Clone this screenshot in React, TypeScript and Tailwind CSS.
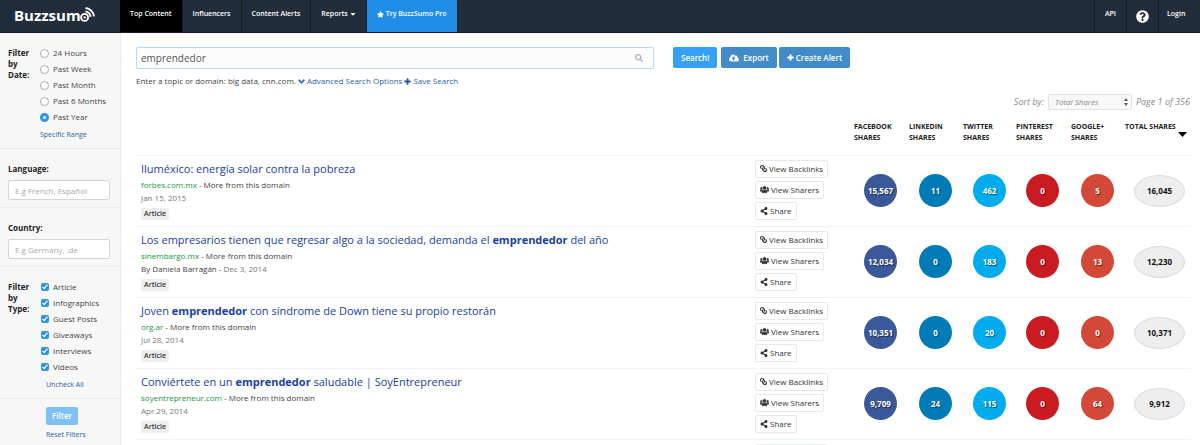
import type { ReactNode } from "react";
import {
  FaCaretDown,
  FaChevronDown,
  FaCloudUploadAlt,
  FaLink,
  FaPlus,
  FaQuestionCircle,
  FaSearch,
  FaShareAlt,
  FaStar,
  FaUsers,
} from "react-icons/fa";

const DATES = ["24 Hours", "Past Week", "Past Month", "Past 6 Months", "Past Year"];
const TYPES = ["Article", "Infographics", "Guest Posts", "Giveaways", "Interviews", "Videos"];

const ROWS = [
  {
    title: <>Iluméxico: energía solar contra la pobreza</>,
    domain: "forbes.com.mx",
    date: "Jan 15, 2015",
    shares: ["15,567", "11", "462", "0", "5"],
    total: "16,045",
  },
  {
    title: (
      <>
        Los empresarios tienen que regresar algo a la sociedad, demanda el <b>emprendedor</b> del año
      </>
    ),
    domain: "sinembargo.mx",
    author: "Daniela Barragán",
    date: "Dec 3, 2014",
    shares: ["12,034", "0", "183", "0", "13"],
    total: "12,230",
  },
  {
    title: (
      <>
        Joven <b>emprendedor</b> con síndrome de Down tiene su propio restorán
      </>
    ),
    domain: "org.ar",
    date: "Jul 28, 2014",
    shares: ["10,351", "0", "20", "0", "0"],
    total: "10,371",
  },
  {
    title: (
      <>
        Conviértete en un <b>emprendedor</b> saludable | SoyEntrepreneur
      </>
    ),
    domain: "soyentrepreneur.com",
    date: "Apr 29, 2014",
    shares: ["9,709", "24", "115", "0", "64"],
    total: "9,912",
  },
];

const SHARE_COLORS = ["bg-[#3b5998]", "bg-[#007bb6]", "bg-[#00aced]", "bg-[#cb1b22]", "bg-[#d34836]"];

const Logo = () => (
  <a href="#" aria-label="Buzzsumo" className="flex w-[120px] items-center pb-0.5 pl-[14px] text-white">
    <span className="text-[15px] font-bold">Buzzsum</span>
    <svg viewBox="0 0 16 20" className="-ml-px h-5 w-4" fill="none" stroke="currentColor">
      <circle cx="4.6" cy="12.4" r="3.5" strokeWidth="1.9" />
      <circle cx="4.6" cy="12.4" r="1" fill="currentColor" strokeWidth="0.4" />
      <path d="M5.4 6.4a6.4 6.4 0 0 1 5.2 5.4" strokeWidth="1.8" />
      <path d="M5.6 3a9.6 9.6 0 0 1 8.4 8.4" strokeWidth="1.8" />
    </svg>
  </a>
);

const NavLink = ({ children, className = "" }: { children: ReactNode; className?: string }) => (
  <a href="#" className={`flex items-center gap-0.5 border-r border-[#161d27] px-2.5 pb-1 ${className}`}>
    {children}
  </a>
);

const Header = () => (
  <header className="flex h-[33px] border-b border-[#161d27] bg-[#222d3b] text-[7px] font-semibold text-white">
    <Logo />
    <nav className="flex flex-1">
      <NavLink className="bg-black">Top Content</NavLink>
      <NavLink>Influencers</NavLink>
      <NavLink>Content Alerts</NavLink>
      <NavLink>
        Reports <FaCaretDown className="-mx-px size-2" />
      </NavLink>
      <NavLink className="bg-[#218de6]">
        <FaStar className="size-[7px]" /> Try BuzzSumo Pro
      </NavLink>
      <NavLink className="ml-auto border-l">API</NavLink>
      <a href="#" aria-label="Help" className="flex items-center border-r border-[#161d27] px-[9px]">
        <FaQuestionCircle className="size-[13px]" />
      </a>
      <a href="#" className="flex w-[41px] items-center px-2 pb-1">
        Login
      </a>
    </nav>
  </header>
);

const TextFilter = ({ id, label, placeholder }: { id: string; label: string; placeholder: string }) => (
  <div className="border-b border-[#eceeee] px-2 pb-[7px] pt-3">
    <label htmlFor={id} className="block leading-4 font-bold text-[#222]">
      {label}
    </label>
    <input
      id={id}
      placeholder={placeholder}
      className="mt-[3px] h-5 w-[102px] rounded-xs border border-[#d5d5d5] bg-white px-1.5 placeholder:text-[#aaa]"
    />
  </div>
);

const Sidebar = () => (
  <aside className="w-[121px] shrink-0 border-r border-[#e8eced] bg-[#f7f7f7] text-[8px] text-[#444]">
    <fieldset className="flex border-b border-[#eceeee] px-2 pb-[7px] pt-3">
      <legend className="float-left w-8 pt-0.5 font-bold leading-[11px] text-[#222]">Filter by Date:</legend>
      <div className="flex flex-col">
        {DATES.map((date) => (
          <label key={date} className="flex h-4 items-center gap-1 leading-4">
            <input
              type="radio"
              name="date"
              defaultChecked={date === "Past Year"}
              className="size-[9px] appearance-none rounded-full border border-[#aaa] bg-white checked:border-[3px] checked:border-[#2b95f5]"
            />
            {date}
          </label>
        ))}
        <a href="#" className="mt-1 text-[7px] leading-3 text-[#2a5f9e]">
          Specific Range
        </a>
      </div>
    </fieldset>
    <TextFilter id="language" label="Language:" placeholder="E.g French, Español" />
    <TextFilter id="country" label="Country:" placeholder="E.g Germany, .de" />
    <fieldset className="flex border-b border-[#eceeee] px-2 pb-[7px] pt-3">
      <legend className="float-left w-8 pt-0.5 font-bold leading-[11px] text-[#222]">Filter by Type:</legend>
      <div className="flex flex-col">
        {TYPES.map((type) => (
          <label key={type} className="flex h-4 items-center gap-1 leading-4">
            <input type="checkbox" defaultChecked className="ml-px size-2 accent-[#2b95f5]" />
            {type}
          </label>
        ))}
        <a href="#" className="ml-[6px] mt-1 text-[7px] leading-3 text-[#2a5f9e]">
          Uncheck All
        </a>
      </div>
    </fieldset>
    <div className="flex flex-col items-start gap-1 py-2 pl-[46px]">
      <button type="button" className="h-[18px] rounded-xs bg-[#7fc0f7] px-1.5 font-semibold text-white">
        Filter
      </button>
      <a href="#" className="text-[7px] leading-3 text-[#2a5f9e]">
        Reset Filters
      </a>
    </div>
  </aside>
);

const SearchBar = () => (
  <form className="flex items-start">
    <div className="w-[518px]">
      <div className="flex h-[22px] items-center rounded-xs border border-[#b5daf5] bg-[#fcfcfc] pl-1 pr-2.5">
        <input aria-label="Search" defaultValue="emprendedor" className="flex-1 text-[10px] text-[#555] outline-none" />
        <FaSearch className="size-2 text-[#9fb0c8]" />
      </div>
      <p className="mt-1.5 flex items-center gap-0.5 text-[8px] leading-3 text-[#444]">
        Enter a topic or domain: big data, cnn.com.
        <a href="#" className="flex items-center gap-0.5 text-[#2a5f9e]">
          <FaChevronDown className="size-[7px] stroke-current stroke-[50]" /> Advanced Search Options
        </a>
        <a href="#" className="flex items-center gap-0.5 text-[#2a5f9e]">
          <FaPlus className="size-[7px] stroke-current stroke-[50]" /> Save Search
        </a>
      </p>
    </div>
    <div className="ml-[19px] flex gap-0.5 text-[8px] font-semibold text-white">
      <button type="submit" className="mr-0.5 h-[21px] rounded-xs bg-[#36a0f7] px-2">
        Search!
      </button>
      <button type="button" className="flex h-[21px] items-center gap-1 rounded-xs bg-[#428bca] px-2">
        <FaCloudUploadAlt className="size-[10px]" /> Export
      </button>
      <button type="button" className="flex h-[21px] items-center gap-0.5 rounded-xs bg-[#428bca] px-2">
        <FaPlus className="size-[7px] stroke-current stroke-[50]" /> Create Alert
      </button>
    </div>
  </form>
);

const SortBar = () => (
  <div className="flex h-4 items-center justify-end gap-1 text-[9px] italic text-[#888]">
    <label htmlFor="sort">Sort by:</label>
    <div className="relative">
      <select
        id="sort"
        className="block h-4 w-[84px] appearance-none rounded-xs border border-[#e2e2e2] bg-[#f8f8f8] pl-1.5 text-[8px] italic"
      >
        <option>Total Shares</option>
      </select>
      <svg viewBox="0 0 4 8" className="pointer-events-none absolute right-1 top-1 h-2 w-1 fill-[#4b5a75]">
        <path d="M2 0l2 3H0zM2 8l2-3H0z" />
      </svg>
    </div>
    <span>Page 1 of 356</span>
  </div>
);

const ActionButton = ({ icon, children }: { icon: ReactNode; children: ReactNode }) => (
  <button
    type="button"
    className="flex h-[18px] items-center gap-0.5 rounded-xs border border-[#e6e9ea] bg-white px-1 text-[8px] text-[#333]"
  >
    {icon}
    {children}
  </button>
);

const Results = () => (
  <table className="w-full table-fixed text-left">
    <colgroup>
      <col />
      <col className="w-[99px]" />
      <col className="w-[55px]" />
      <col className="w-[54px]" />
      <col className="w-[53px]" />
      <col className="w-[55px]" />
      <col className="w-[54px]" />
      <col className="w-[65px]" />
    </colgroup>
    <thead>
      <tr className="h-[34px] align-top text-[7px] leading-[11px] text-[#222]">
        <th aria-label="Article" />
        <th aria-label="Actions" />
        <th>FACEBOOK SHARES</th>
        <th>LINKEDIN SHARES</th>
        <th>TWITTER SHARES</th>
        <th>PINTEREST SHARES</th>
        <th>GOOGLE+ SHARES</th>
        <th>
          TOTAL SHARES
          <svg viewBox="0 0 9 5" className="ml-[53px] h-[5px] w-[9px]">
            <path d="M0 0h9L4.5 5z" />
          </svg>
        </th>
      </tr>
    </thead>
    <tbody>
      {ROWS.map((row) => (
        <tr key={row.domain} className="h-[71px] border-y border-[#f3f3f3]">
          <td className="pl-[5px] pt-[3px] align-top text-[8px] leading-[13px] text-[#444]">
            <h3 className="text-[11px] leading-[19px] text-[#1a41a5]">
              <a href="#">{row.title}</a>
            </h3>
            <p>
              <a href="#" className="text-[#1a9641]">
                {row.domain}
              </a>{" "}
              - <a href="#">More from this domain</a>
            </p>
            <p className="text-[#777]">
              {row.author && <span className="text-[#444]">By {row.author} - </span>}
              {row.date}
            </p>
            <span className="mt-1 block w-7 rounded-xs bg-[#eee] text-center text-[7px] font-semibold leading-3 text-[#333]">
              Article
            </span>
          </td>
          <td className="pt-1 align-top">
            <div className="flex flex-col items-start gap-[3px]">
              <ActionButton icon={<FaLink className="size-[7px] -scale-x-100" />}>View Backlinks</ActionButton>
              <ActionButton icon={<FaUsers className="size-[9px] stroke-current stroke-[30]" />}>
                View Sharers
              </ActionButton>
              <ActionButton icon={<FaShareAlt className="size-2" />}>Share</ActionButton>
            </div>
          </td>
          {row.shares.map((count, i) => (
            <td key={i}>
              <span
                className={`ml-2.5 flex size-[33px] items-center justify-center rounded-full text-[8px] font-bold text-white text-shadow-[1px_1px_1px_#0008] ${SHARE_COLORS[i]}`}
              >
                {count}
              </span>
            </td>
          ))}
          <td>
            <span className="ml-[9px] flex h-8 w-[51px] items-center justify-center rounded-[50%] border border-[#ddd] bg-[#eee] text-[8px] font-bold text-[#111]">
              {row.total}
            </span>
          </td>
        </tr>
      ))}
      <tr className="h-[71px]">
        <td />
        <td className="pt-1 align-top">
          <ActionButton icon={<FaLink className="size-[7px] -scale-x-100" />}>
            <span className="w-[54px]" />
          </ActionButton>
        </td>
        <td colSpan={6} />
      </tr>
    </tbody>
  </table>
);

export default function App() {
  return (
    <div className="flex h-screen flex-col overflow-hidden bg-white font-['Open_Sans',sans-serif]">
      <Header />
      <div className="flex flex-1 items-stretch overflow-hidden">
        <Sidebar />
        <main className="min-w-0 flex-1 pl-[15px] pr-[10px] pt-[14px]">
          <SearchBar />
          <div className="pb-[11px] pt-[7px]">
            <SortBar />
          </div>
          <Results />
        </main>
      </div>
    </div>
  );
}
